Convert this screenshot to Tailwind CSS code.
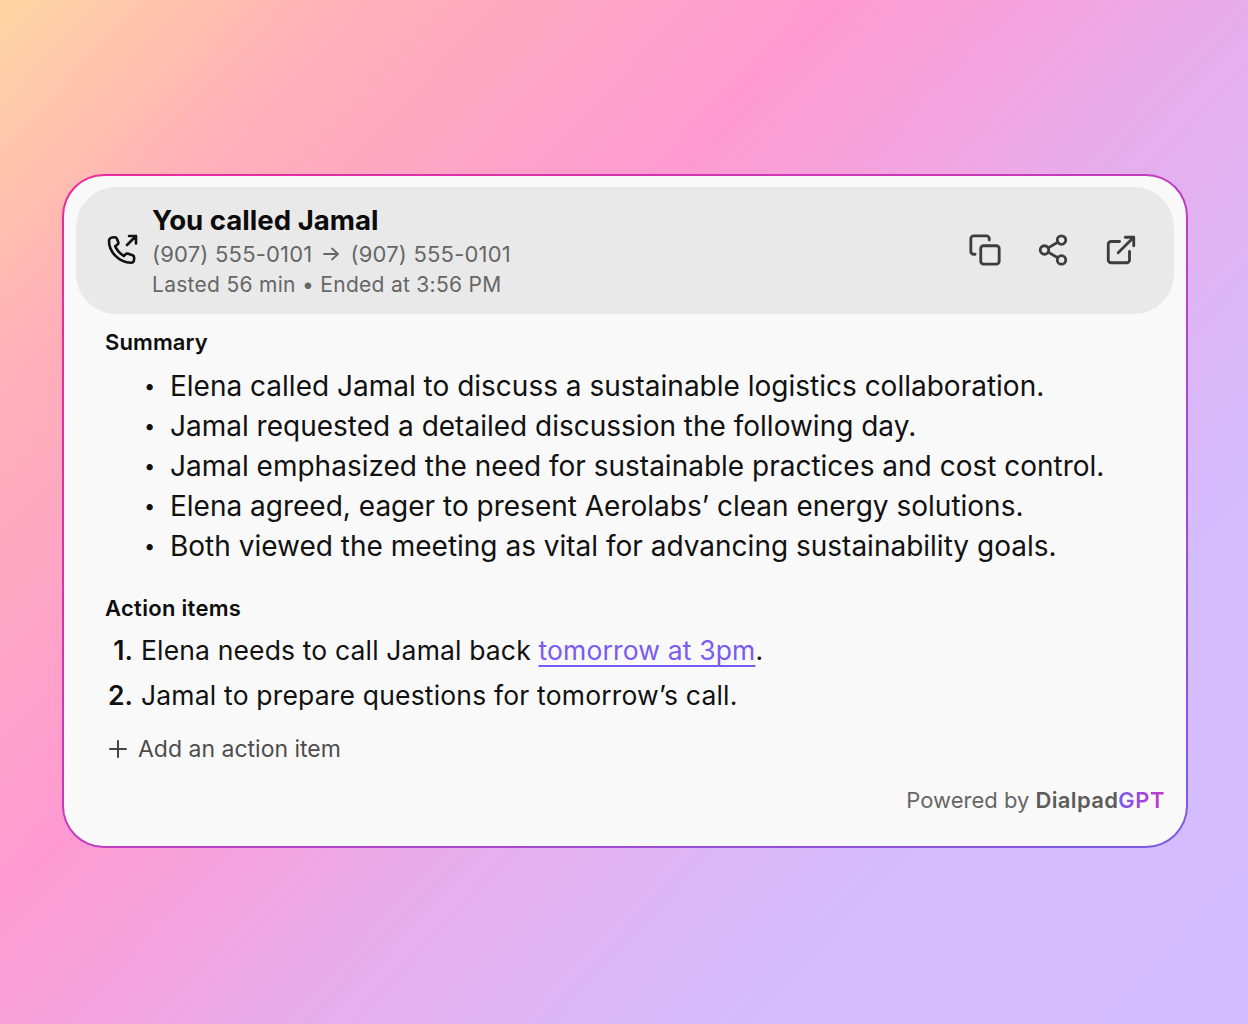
<!DOCTYPE html>
<html lang="en">
<head>
  <meta charset="UTF-8" />
  <title>Call summary</title>
  <script src="https://cdn.jsdelivr.net/npm/@tailwindcss/browser@4"></script>
</head>
<body class="h-[1024px] w-[1248px] overflow-hidden font-['Inter',sans-serif] bg-[linear-gradient(133deg,#ffd5a2_0%,#ffb0b8_16%,#ff9ad2_38%,#e6aeec_58%,#d4bcff_78%,#d3bcff_100%)]">
  <div class="pt-[174px] pl-[62px]">
    <!-- Card with gradient border -->
    <div class="w-[1126px] h-[674px] rounded-[42px] p-[2px] bg-[linear-gradient(to_bottom_right,#ee2a9a_0%,#c03cc0_50%,#7a5ce4_100%)]">
      <div class="h-full rounded-[40px] bg-[#f9f9f9] px-[12px] pt-[11px] text-[#111]">
        <!-- Header -->
        <div class="h-[127px] rounded-[40px] bg-[#e9e9e9] flex items-center pl-[30px] pr-[36px]">
          <svg class="w-[32px] h-[32px] mr-[14px] mt-[-2px]" viewBox="0 0 32 32" fill="none" stroke="#111" stroke-width="2.600" stroke-linecap="round" stroke-linejoin="round">
            <path d="M23 2H30V9.500M30 2 21 11" />
            <path d="M3.500 5.200C3.900 4.200 5 3.700 6 3.500L8.700 3.200C9.700 3.100 10.400 3.600 10.800 4.500L12.200 8C12.600 9 12.300 9.900 11.500 10.500L9.200 12.300C10.500 15.500 14 19.500 17.800 22L19.500 20.300C20.300 19.600 21.200 19.500 22.200 19.800L26.500 21.300C27.600 21.700 28.200 22.600 28.200 23.700L28 26C27.900 27.500 26.500 28.700 25 28.700C13 28.500 3 18 3 7C3 6.400 3.200 5.800 3.500 5.200Z" />
          </svg>
          <div class="flex-1 pt-[1px]">
            <div class="text-[27.600px] leading-[32px] font-bold text-[#0b0b0b]">You called Jamal</div>
            <div class="text-[22px] leading-[34px] mt-[1px] text-[#666] flex items-center tracking-[0.2px]">
              <span>(907) 555-0101</span>
              <svg class="w-[18px] h-[18px] mx-[10px]" viewBox="0 0 18 18" fill="none" stroke="#666" stroke-width="1.800" stroke-linecap="round" stroke-linejoin="round"><path d="M2 9h14M10 3.500 16 9l-6 5.500" /></svg>
              <span>(907) 555-0101</span>
            </div>
            <div class="text-[21px] leading-[28px] text-[#666] tracking-[0.29px]">Lasted 56 min • Ended at 3:56 PM</div>
          </div>
          <div class="flex items-center gap-[34px] mt-[-2px] text-[#3d3d3d]">
            <svg class="w-[34px] h-[34px]" viewBox="0 0 24 24" fill="none" stroke="currentColor" stroke-width="2" stroke-linecap="round" stroke-linejoin="round">
              <rect x="9" y="9" width="13" height="13" rx="2" />
              <path d="M5 15H4a2 2 0 0 1-2-2V4a2 2 0 0 1 2-2h9a2 2 0 0 1 2 2v1" />
            </svg>
            <svg class="w-[34px] h-[34px]" viewBox="0 0 24 24" fill="none" stroke="currentColor" stroke-width="2" stroke-linecap="round" stroke-linejoin="round">
              <circle cx="18" cy="5" r="3" />
              <circle cx="6" cy="12" r="3" />
              <circle cx="18" cy="19" r="3" />
              <path d="M8.590 13.510l6.830 3.980M15.410 6.510l-6.820 3.980" />
            </svg>
            <svg class="w-[34px] h-[34px]" viewBox="0 0 24 24" fill="none" stroke="currentColor" stroke-width="2" stroke-linecap="round" stroke-linejoin="round">
              <path d="M18 13v6a2 2 0 0 1-2 2H5a2 2 0 0 1-2-2V8a2 2 0 0 1 2-2h6" />
              <path d="M15 3h6v6M10 14 21 3" />
            </svg>
          </div>
        </div>

        <!-- Summary -->
        <h2 class="ml-[29px] mt-[15px] text-[22px] leading-[26px] font-semibold tracking-[0.1px] text-[#0d0d0d]">Summary</h2>
        <ul class="mt-[11px] ml-[94px] text-[28px] leading-[40px] text-[#111]">
          <li class="relative"><span class="absolute left-[-26px] text-[20px]">•</span>Elena called Jamal to discuss a sustainable logistics collaboration.</li>
          <li class="relative"><span class="absolute left-[-26px] text-[20px]">•</span>Jamal requested a detailed discussion the following day.</li>
          <li class="relative"><span class="absolute left-[-26px] text-[20px]">•</span>Jamal emphasized the need for sustainable practices and cost control.</li>
          <li class="relative"><span class="absolute left-[-26px] text-[20px]">•</span>Elena agreed, eager to present Aerolabs’ clean energy solutions.</li>
          <li class="relative"><span class="absolute left-[-26px] text-[20px]">•</span>Both viewed the meeting as vital for advancing sustainability goals.</li>
        </ul>

        <!-- Action items -->
        <h2 class="ml-[29px] mt-[29px] text-[22px] leading-[26px] font-semibold tracking-[0.3px] text-[#0d0d0d]">Action items</h2>
        <ol class="mt-[7px] text-[26.500px] leading-[45px] text-[#111]">
          <li class="flex"><span class="w-[65px] text-right font-semibold pr-[8px]">1.</span><span class="tracking-[0.15px]">Elena needs to call Jamal back <a class="text-[#7a5cf0] underline underline-offset-[5px] decoration-[1.500px]">tomorrow at 3pm</a>.</span></li>
          <li class="flex"><span class="w-[65px] text-right font-semibold pr-[8px]">2.</span><span class="tracking-[0.18px]">Jamal to prepare questions for tomorrow’s call.</span></li>
        </ol>

        <div class="ml-[32px] mt-[16px] flex items-center text-[23px] leading-[30px] text-[#4d4d4d]">
          <svg class="w-[20px] h-[20px] mr-[10px]" viewBox="0 0 20 20" fill="none" stroke="#444" stroke-width="2" stroke-linecap="round"><path d="M10 2v16M2 10h16" /></svg>
          <span>Add an action item</span>
        </div>

        <div class="mt-[21px] mr-[9px] text-right text-[22px] leading-[30px] text-[#666]">
          Powered by <span class="font-semibold tracking-[0.35px] text-[#5c5c5c]">Dialpad</span><span class="font-semibold tracking-[0.5px] text-transparent bg-clip-text bg-[linear-gradient(90deg,#7a5cf0,#c236c8)]">GPT</span>
        </div>
      </div>
    </div>
  </div>
</body>
</html>
